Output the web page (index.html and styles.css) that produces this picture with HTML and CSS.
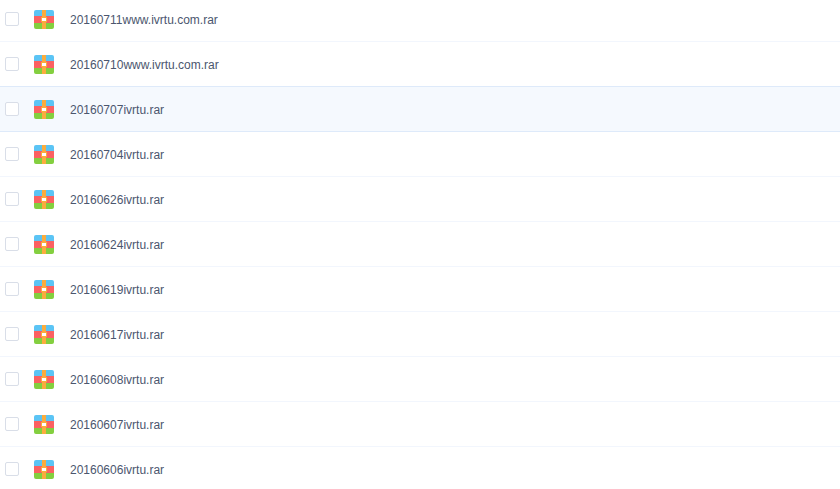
FILE: index.html
```html
<!DOCTYPE html>
<html lang="en">
<head>
  <meta charset="UTF-8" />
  <title>Files</title>
  <link rel="stylesheet" href="styles.css">
</head>
<body>
  <svg class="defs" width="0" height="0">
    <symbol id="rar" viewBox="0 0 20 19">
      <path d="M0 6V2a2 2 0 0 1 2-2h16a2 2 0 0 1 2 2v4z" fill="#5bc4f5"/>
      <rect y="6" width="20" height="7" fill="#fb6162"/>
      <path d="M0 13h20v4a2 2 0 0 1-2 2H2a2 2 0 0 1-2-2z" fill="#83cf3f"/>
      <rect x="8" width="4" height="19" fill="#fbac3e"/>
      <rect x="7" y="7" width="6" height="5" fill="#fbac3e"/>
      <rect x="8" y="8" width="4" height="3" fill="#fff"/>
    </symbol>
  </svg>

  <ul class="file-list">
    <li class="file-row"><span class="check"></span><svg class="icon"><use href="#rar"/></svg><span class="name">20160711www.ivrtu.com.rar</span></li>
    <li class="file-row"><span class="check"></span><svg class="icon"><use href="#rar"/></svg><span class="name">20160710www.ivrtu.com.rar</span></li>
    <li class="file-row active"><span class="check"></span><svg class="icon"><use href="#rar"/></svg><span class="name">20160707ivrtu.rar</span></li>
    <li class="file-row"><span class="check"></span><svg class="icon"><use href="#rar"/></svg><span class="name">20160704ivrtu.rar</span></li>
    <li class="file-row"><span class="check"></span><svg class="icon"><use href="#rar"/></svg><span class="name">20160626ivrtu.rar</span></li>
    <li class="file-row"><span class="check"></span><svg class="icon"><use href="#rar"/></svg><span class="name">20160624ivrtu.rar</span></li>
    <li class="file-row"><span class="check"></span><svg class="icon"><use href="#rar"/></svg><span class="name">20160619ivrtu.rar</span></li>
    <li class="file-row"><span class="check"></span><svg class="icon"><use href="#rar"/></svg><span class="name">20160617ivrtu.rar</span></li>
    <li class="file-row"><span class="check"></span><svg class="icon"><use href="#rar"/></svg><span class="name">20160608ivrtu.rar</span></li>
    <li class="file-row"><span class="check"></span><svg class="icon"><use href="#rar"/></svg><span class="name">20160607ivrtu.rar</span></li>
    <li class="file-row"><span class="check"></span><svg class="icon"><use href="#rar"/></svg><span class="name">20160606ivrtu.rar</span></li>
  </ul>
</body>
</html>
```

FILE: styles.css
```css
html, body {
  height: 100%;
}
body {
  margin: 0;
  overflow: hidden;
  background: #fff;
  font-family: "Liberation Sans", Arial, sans-serif;
  font-size: 12px;
  color: #4b566e;
}
.defs {
  display: block;
  height: 0;
}
.file-list {
  list-style: none;
  margin: -3px 0 0;
  padding: 0;
}
.file-row {
  display: flex;
  align-items: center;
  height: 44px;
  padding-left: 5px;
  border-bottom: 1px solid #f2f6fd;
}
.file-row.active {
  background: #f5f9fe;
  border-bottom-color: #deeafa;
  box-shadow: 0 -1px 0 #deeafa;
}
.check {
  box-sizing: border-box;
  width: 14px;
  height: 14px;
  border: 1px solid #d9dee8;
  border-radius: 2px;
  background: #fff;
}
.icon {
  width: 20px;
  height: 19px;
  margin-top: 1px;
  margin-left: 15px;
}
.name {
  margin-top: 2px;
  margin-left: 16px;
  white-space: nowrap;
}
```
